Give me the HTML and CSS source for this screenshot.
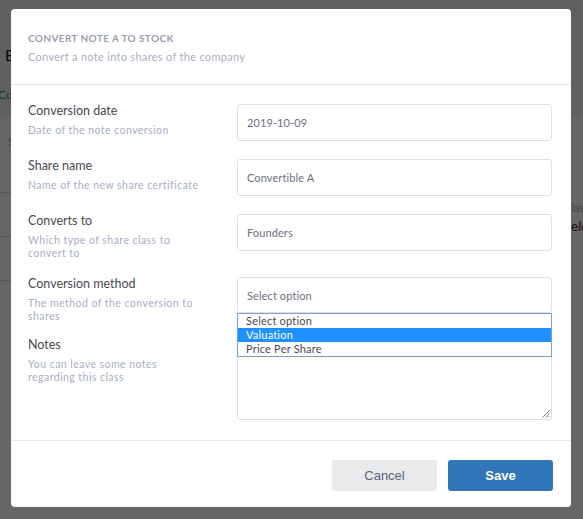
FILE: index.html
```html
<!DOCTYPE html>
<html>
<head>
<meta charset="utf-8">
<link rel="stylesheet" href="styles.css">
</head>
<body>
<div class="page">
  <div class="page-head">
    <div class="page-title">Board</div>
    <div class="page-tab">Convertibles</div>
  </div>
  <div class="page-table">
    <div class="page-th">Shares</div>
    <div class="page-right">
      <div class="page-class">Class</div>
      <div class="page-val">Select</div>
    </div>
    <div class="page-line"></div>
    <div class="page-line"></div>
    <div class="page-line"></div>
  </div>
</div>
<div class="overlay">
  <div class="modal">
    <div class="modal-header">
      <div class="modal-title">Convert note A to stock</div>
      <div class="modal-sub">Convert a note into shares of the company</div>
    </div>
    <div class="modal-body">
      <div class="row">
        <div class="row-info">
          <div class="row-label">Conversion date</div>
          <div class="row-desc">Date of the note conversion</div>
        </div>
        <div class="field">2019-10-09</div>
      </div>
      <div class="row">
        <div class="row-info">
          <div class="row-label">Share name</div>
          <div class="row-desc">Name of the new share certificate</div>
        </div>
        <div class="field">Convertible A</div>
      </div>
      <div class="row">
        <div class="row-info">
          <div class="row-label">Converts to</div>
          <div class="row-desc">Which type of share class to convert to</div>
        </div>
        <div class="field">Founders</div>
      </div>
      <div class="row">
        <div class="row-info">
          <div class="row-label">Conversion method</div>
          <div class="row-desc">The method of the conversion to shares</div>
        </div>
        <div class="select-wrap">
          <div class="field">Select option</div>
          <div class="dropdown">
            <div class="opt">Select option</div>
            <div class="opt opt-sel">Valuation</div>
            <div class="opt">Price Per Share</div>
          </div>
        </div>
      </div>
      <div class="row row-notes">
        <div class="row-info">
          <div class="row-label">Notes</div>
          <div class="row-desc">You can leave some notes regarding this class</div>
        </div>
        <div class="textarea">
          <svg class="grip" width="9" height="9" viewBox="0 0 9 9"><path d="M8.5 1.5L1.5 8.5M8.5 4.5L4.5 8.5M8.5 7L7 8.5" stroke="#777" stroke-width="0.9" fill="none"/></svg>
        </div>
      </div>
    </div>
    <div class="modal-footer">
      <button class="btn btn-cancel">Cancel</button>
      <button class="btn btn-save">Save</button>
    </div>
  </div>
</div>
</body>
</html>
```
FILE: styles.css
```css
* { box-sizing: border-box; }
html, body { margin: 0; padding: 0; }
body {
  width: 583px;
  height: 519px;
  overflow: hidden;
  position: relative;
  font-family: Lato, "Liberation Sans", sans-serif;
  background: #ffffff;
}
.page { height: 519px; }
.page-head {
  background: #eef0f0;
  height: 117px;
  padding: 46px 0 0 5px;
  position: relative;
}
.page-title { font-size: 15px; color: #111; }
.page-tab { font-size: 12px; color: #1f9d55; margin: 23px 0 0 -7px; }
.page-table { padding: 17px 0 0 8px; position: relative; height: 402px; }
.page-th { font-size: 12px; line-height: 15px; color: #999; }
.page-right { position: absolute; right: -16px; top: 84px; }
.page-class { font-size: 11px; color: #aaa; }
.page-val { font-size: 13px; color: #222; margin-top: 4px; }
.page-line { height: 1px; background: #d8d8d8; margin: 43px 0 0 -8px; width: 40px; }
.page-line:first-of-type { margin-top: 271px; }

.overlay {
  position: absolute;
  inset: 0;
  background: rgba(0, 0, 0, 0.6);
}
.modal {
  position: absolute;
  left: 11px;
  top: 9px;
  width: 560px;
  height: 498px;
  background: #fff;
  border-radius: 4px;
  display: flex;
  flex-direction: column;
}
.modal-header {
  height: 76px;
  padding: 23px 17px 0;
  border-bottom: 1px solid #e8eaee;
}
.modal-title {
  font-size: 10px;
  font-weight: 700;
  text-transform: uppercase;
  color: #9aa0ae;
  letter-spacing: 0.4px;
}
.modal-sub {
  margin-top: 6px;
  font-size: 11px;
  color: #a9b0c0;
  letter-spacing: 0.3px;
}
.modal-body {
  padding: 19px 18px 20px 17px;
  border-bottom: 1px solid #e8eaee;
}
.row {
  display: flex;
  margin-bottom: 18px;
}
.row-notes { margin-top: -2px; margin-bottom: 0; }
.row-info { width: 209px; padding-right: 33px; }
.row-label {
  font-size: 12.5px;
  line-height: 14px;
  color: #484a50;
  letter-spacing: 0;
}
.row-desc {
  margin-top: 6px;
  font-size: 10.5px;
  line-height: 12.5px;
  color: #a7afc2;
  letter-spacing: 0.45px;
}
.field {
  width: 315px;
  height: 37px;
  border: 1px solid #dedfe3;
  border-radius: 3px;
  padding: 0 9px;
  display: flex;
  align-items: center;
  font-size: 11px;
  color: #6b7080;
  letter-spacing: 0.1px;
}
.select-wrap { position: relative; width: 315px; height: 37px; }
.select-wrap .field { height: 36px; }
.dropdown {
  position: absolute;
  left: 0;
  top: 36px;
  width: 315px;
  border: 1px solid #7b9fdc;
  background: #fff;
  z-index: 2;
}
.opt {
  height: 14px;
  line-height: 14px;
  padding-left: 8px;
  font-size: 11px;
  color: #4a4a50;
  letter-spacing: 0.2px;
}
.opt-sel { background: #1e90ff; color: #fff; }
.textarea {
  width: 315px;
  height: 82px;
  border: 1px solid #dedfe3;
  border-radius: 3px;
  position: relative;
}
.grip { position: absolute; right: 1px; bottom: 1px; }
.modal-footer {
  flex: 1;
  display: flex;
  justify-content: flex-end;
  gap: 11px;
  padding: 19px 18px 0 0;
}
.btn {
  width: 105px;
  height: 31px;
  border: none;
  border-radius: 3px;
  font-family: "Liberation Sans", Arial, sans-serif;
  font-size: 13px;
}
.btn-cancel { background: #e9eaec; color: #5b6376; }
.btn-save { background: #3175bb; color: #fff; font-weight: 700; }
```
